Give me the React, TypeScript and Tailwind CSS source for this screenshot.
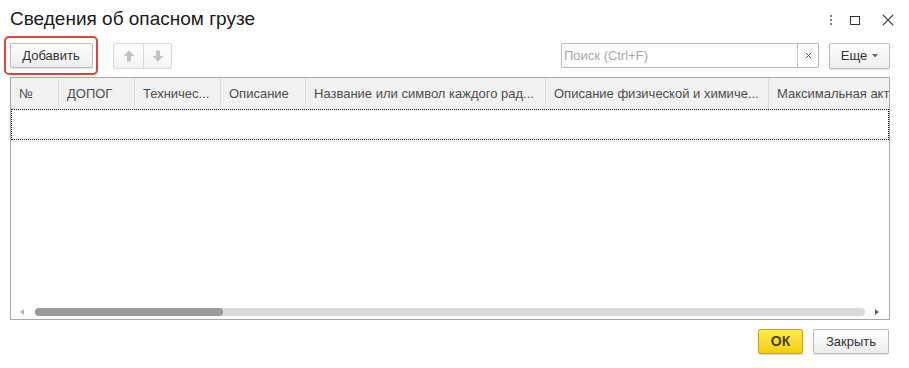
const columns = [
  { title: '№', width: 'w-[48px]' },
  { title: 'ДОПОГ', width: 'w-[76px]' },
  { title: 'Техничес...', width: 'w-[86px]' },
  { title: 'Описание', width: 'w-[85px]' },
  { title: 'Название или символ каждого рад...', width: 'w-[240px]' },
  { title: 'Описание физической и химиче...', width: 'w-[223px]' },
  { title: 'Максимальная акт', width: 'w-[122px]' },
]

function BlockArrow({ down }: { down?: boolean }) {
  return (
    <svg width="12" height="12" viewBox="0 0 12 12" className={down ? 'rotate-180' : ''}>
      <path d="M6 0.5 L11.5 6 H8 V11.5 H4 V6 H0.5 Z" fill="#c2c2c2" />
    </svg>
  )
}

function WindowIcons() {
  return (
    <div className="flex items-center gap-[18px] pr-[5px] pt-[2px]">
      <div className="flex flex-col gap-[1.5px]">
        <span className="block h-[2.5px] w-[2.5px] bg-[#808080]" />
        <span className="block h-[2.5px] w-[2.5px] bg-[#808080]" />
        <span className="block h-[2.5px] w-[2.5px] bg-[#808080]" />
      </div>
      <span className="block h-[9px] w-[10px] border-[1.5px] border-[#333]" />
      <svg width="12" height="12" viewBox="0 0 12 12" className="ml-[4px]">
        <path d="M1 1 L11 11 M11 1 L1 11" stroke="#444" strokeWidth="1.2" />
      </svg>
    </div>
  )
}

export default function App() {
  return (
    <div className="flex h-[368px] w-[909px] flex-col bg-white font-['Liberation_Sans',Arial,sans-serif] text-[#333]">
      <div className="flex h-[35px] items-start justify-between pl-[10px] pr-[10px]">
        <h1 className="pt-[8px] text-[19px] leading-[22px] text-[#1a1a1a]">Сведения об опасном грузе</h1>
        <div className="pt-[12px]">
          <WindowIcons />
        </div>
      </div>

      <div className="flex h-[41px] items-center pl-[10px] pr-[19px]">
        <div className="-ml-[6px] rounded-[5px] border-[2.5px] border-[#e0413a] px-[3.5px] py-[4.5px]">
          <button
            type="button"
            className="h-[25px] w-[83px] rounded-[2px] border border-[#bcbcbc] bg-gradient-to-b from-white to-[#ededed] text-[13px] text-[#333] shadow-[0_1px_1px_rgba(0,0,0,0.12)]"
          >
            Добавить
          </button>
        </div>
        <div className="ml-[15px] flex h-[26px] w-[59px] rounded-[2px] border border-[#dadada] bg-gradient-to-b from-white to-[#f3f3f3]">
          <div className="flex w-[30px] items-center justify-center border-r border-[#dadada]">
            <BlockArrow />
          </div>
          <div className="flex flex-1 items-center justify-center">
            <BlockArrow down />
          </div>
        </div>
        <div className="flex-1" />
        <div className="flex h-[25px] w-[258px] rounded-[2px] border border-[#b8b8b8] bg-white">
          <div className="flex flex-1 items-center pl-[2px] text-[13px] text-[#a8a8a8]">Поиск (Ctrl+F)</div>
          <div className="flex w-[21px] items-center justify-center border-l border-[#c8c8c8]">
            <svg width="7" height="7" viewBox="0 0 7 7">
              <path d="M1 1 L6 6 M6 1 L1 6" stroke="#555" strokeWidth="1" />
            </svg>
          </div>
        </div>
        <button
          type="button"
          className="ml-[10px] flex h-[26px] w-[61px] items-center justify-center gap-[5px] rounded-[2px] border border-[#bcbcbc] bg-gradient-to-b from-white to-[#ededed] text-[13px] text-[#333] shadow-[0_1px_1px_rgba(0,0,0,0.12)]"
        >
          Еще
          <svg width="6" height="4" viewBox="0 0 6 4">
            <path d="M0 0 H6 L3 3.5 Z" fill="#666" />
          </svg>
        </button>
      </div>

      <div className="ml-[10px] mt-[1px] flex h-[243px] w-[880px] flex-col overflow-hidden border border-[#a8a8a8]">
        <div className="flex h-[31px] shrink-0 bg-[#f2f2f2]">
          {columns.map((col, i) => (
            <div
              key={i}
              className={`${col.width} flex shrink-0 items-center overflow-hidden whitespace-nowrap border-r border-[#dedede] pl-[8px] text-[13px] text-[#4d4d4d]`}
            >
              {col.title}
            </div>
          ))}
        </div>
        <div className="h-[31px] shrink-0 border border-dotted border-[#111]" />
        <div className="flex-1" />
        <div className="flex h-[15px] shrink-0 items-start pt-[4px]">
          <div className="flex w-[23px] justify-center pt-[1px]">
            <svg width="4" height="6" viewBox="0 0 4 6">
              <path d="M4 0 V6 L0 3 Z" fill="#b5b5b5" />
            </svg>
          </div>
          <div className="relative ml-[1px] h-[8px] w-[831px] rounded-full bg-[#d9d9d9]">
            <div className="absolute left-0 top-0 h-[8px] w-[188px] rounded-full bg-[#9b9b9b]" />
          </div>
          <div className="flex w-[24px] justify-center pt-[1px]">
            <svg width="4" height="6" viewBox="0 0 4 6">
              <path d="M0 0 V6 L4 3 Z" fill="#666" />
            </svg>
          </div>
        </div>
      </div>

      <div className="flex justify-end gap-[10px] pr-[20px] pt-[9px]">
        <button
          type="button"
          className="h-[25px] w-[45px] rounded-[2px] border border-[#c9a900] bg-gradient-to-b from-[#ffea4d] to-[#f2cf00] text-[14px] font-bold text-[#4a3f00] shadow-[0_1px_1px_rgba(0,0,0,0.15)]"
        >
          ОК
        </button>
        <button
          type="button"
          className="h-[25px] w-[76px] rounded-[2px] border border-[#bcbcbc] bg-gradient-to-b from-white to-[#ededed] text-[13px] text-[#333] shadow-[0_1px_1px_rgba(0,0,0,0.12)]"
        >
          Закрыть
        </button>
      </div>
    </div>
  )
}
